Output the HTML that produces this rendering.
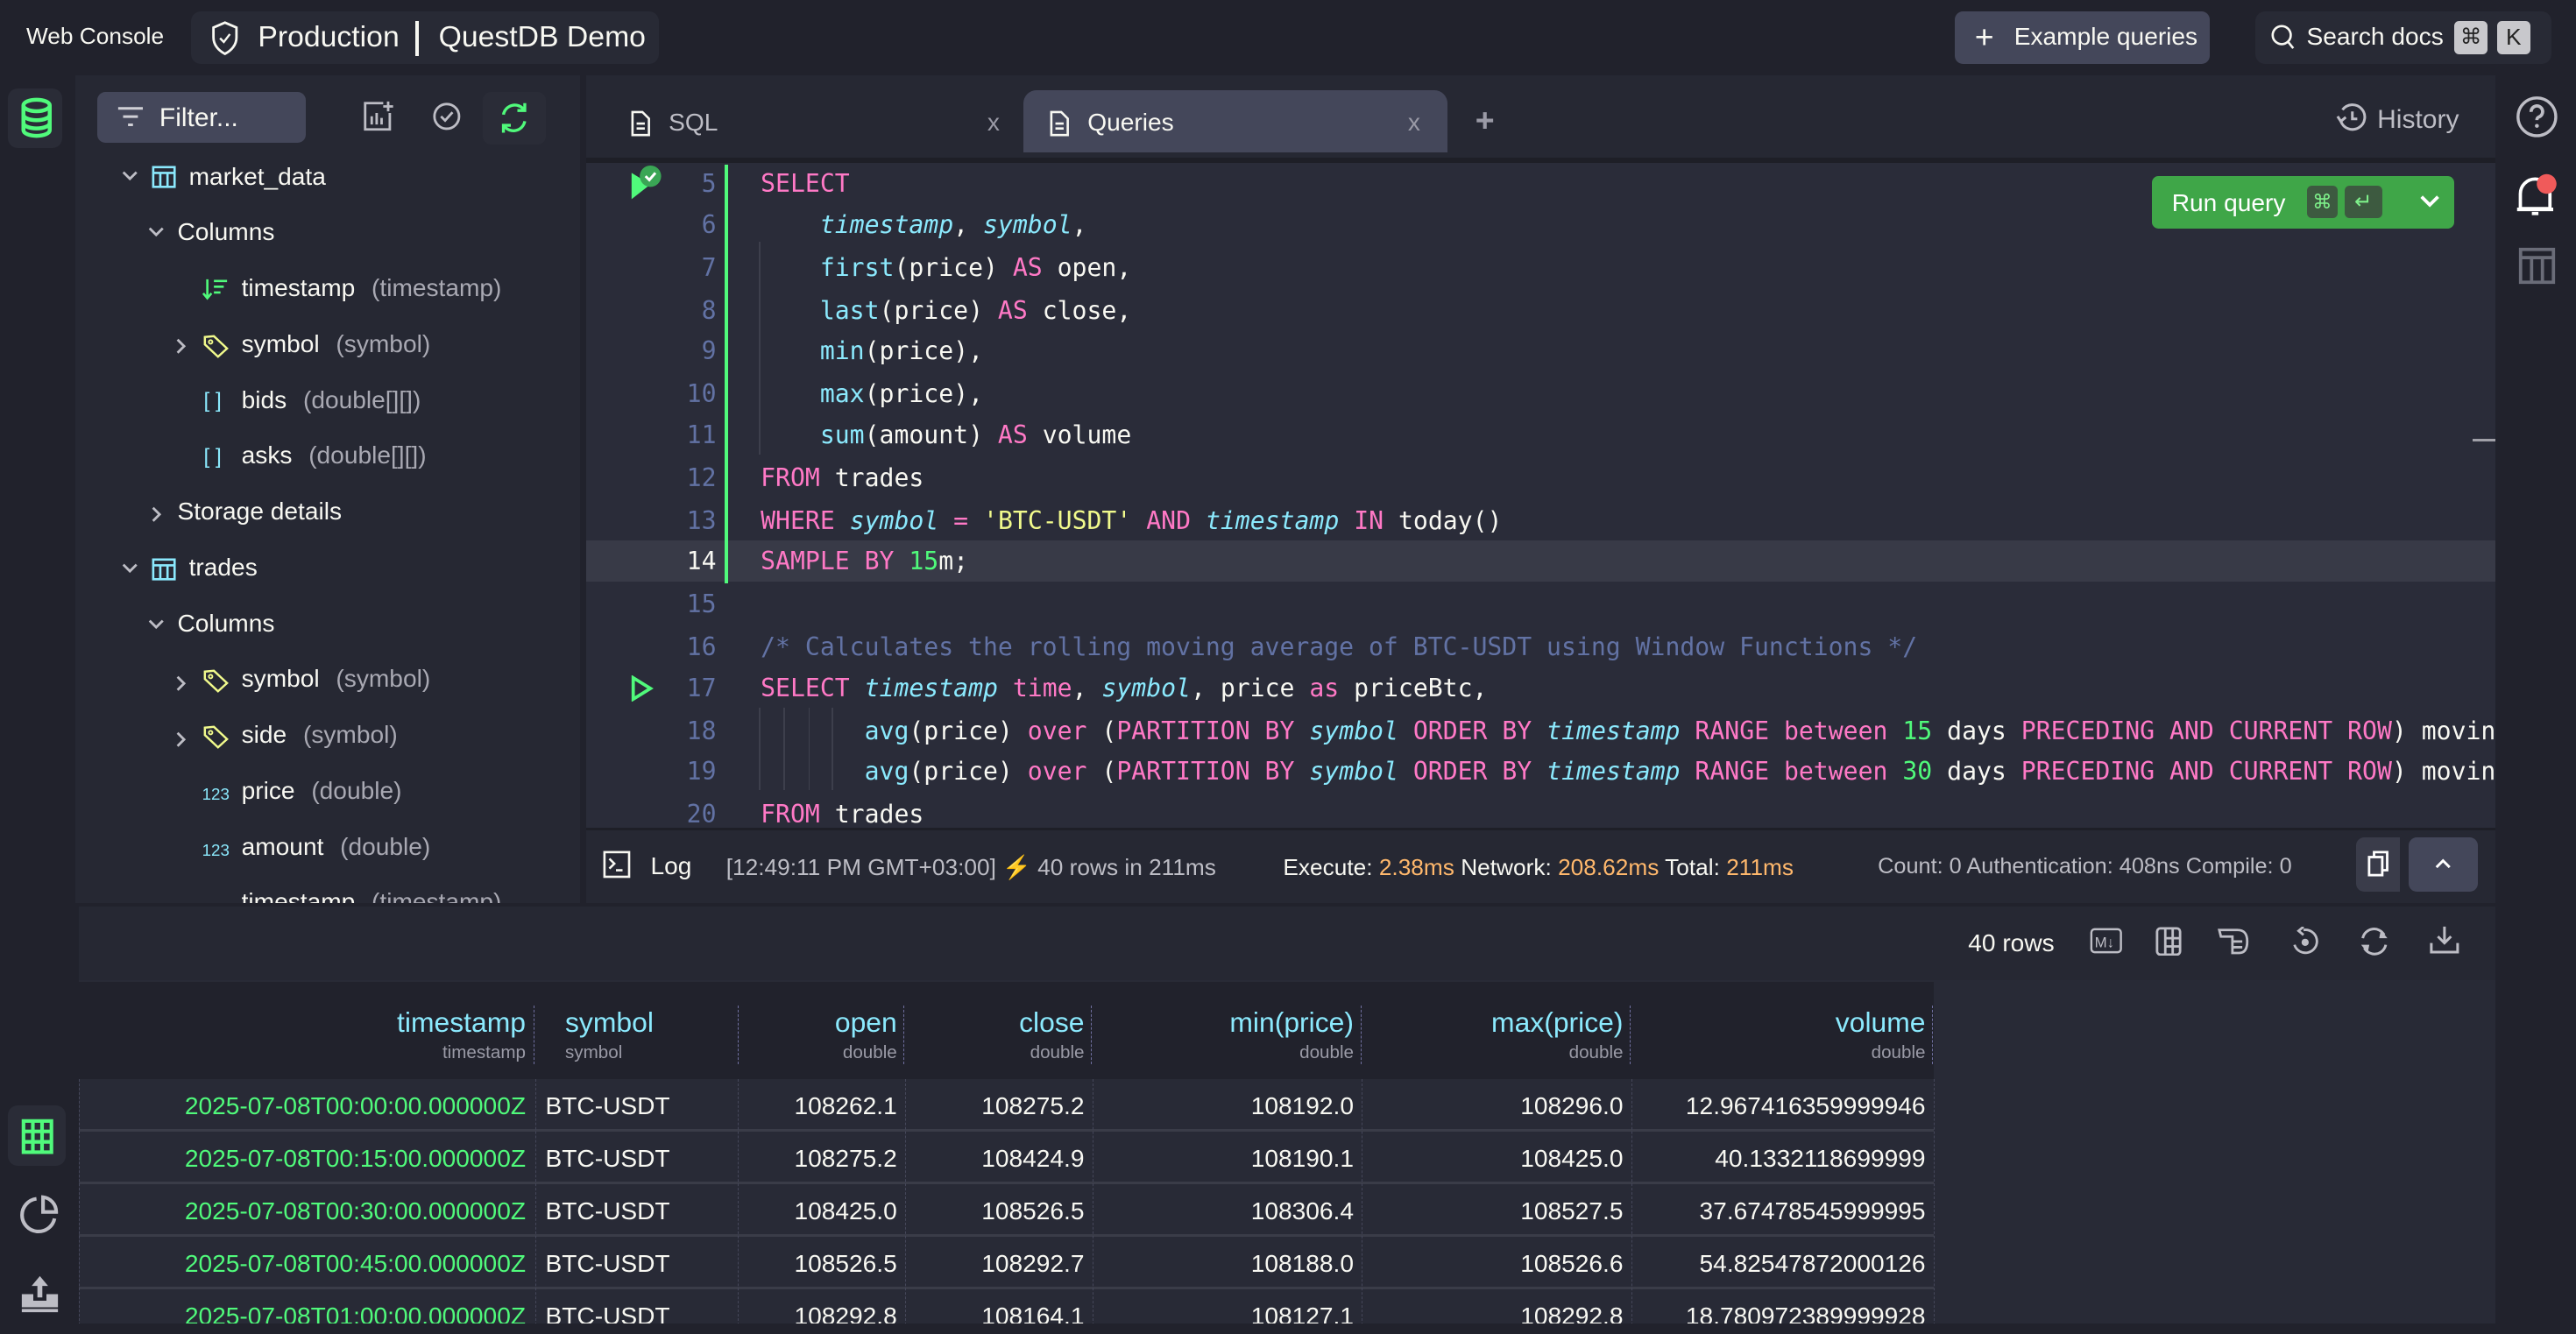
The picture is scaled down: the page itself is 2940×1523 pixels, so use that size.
<!DOCTYPE html>
<html><head><meta charset="utf-8">
<style>
*{box-sizing:border-box;margin:0;padding:0}
html,body{width:2940px;height:1522px;overflow:hidden;background:#21222c}
#app{position:absolute;left:0;top:0;width:1568px;height:812px;zoom:1.875;background:#21222c;font-family:"Liberation Sans",sans-serif;color:#f8f8f2;overflow:hidden}
.a{position:absolute}
.t{position:absolute;white-space:nowrap;margin-top:1px}
.mono{font-family:"DejaVu Sans Mono","Liberation Mono",monospace}
.ln{position:absolute;left:380px;width:56px;text-align:right;color:#6272a4;font-size:15px;margin-top:1px}
.code{position:absolute;left:463px;font-size:15px;white-space:pre;color:#f8f8f2;margin-top:1px}
.k{color:#ff79c6}.f{color:#8be9fd}.i{color:#8be9fd;font-style:italic}.s{color:#f1fa8c}.n{color:#50fa7b}.c{color:#6272a4}
.tree{position:absolute;font-size:15px;color:#f8f8f2;white-space:nowrap;margin-top:1px}
.tree .ty{color:#a9a9b3;margin-left:10px}
.hd{position:absolute;top:613px;text-align:right;color:#8be9fd;font-size:17px}
.hd small{display:block;color:#9a9aa6;font-size:11px;margin-top:2px}
.row{position:absolute;left:48px;width:1129px;height:32px;border-bottom:2px solid #3a3c48}
.vd{position:absolute;top:657px;height:150px;border-left:1px dashed #45475a}
</style></head><body><div id="app">

<!-- top bar -->
<div class="t" style="left:16px;top:13px;font-size:14px">Web Console</div>
<div class="a" style="left:116px;top:7px;width:285px;height:32px;background:#282a35;border-radius:6px"></div>
<svg class="a" style="left:127px;top:12px" width="20" height="22" viewBox="0 0 20 22"><path d="M10 1.5 L17 4.5 V10.5 C17 15 14 18.5 10 20.5 C6 18.5 3 15 3 10.5 V4.5 Z" fill="none" stroke="#f8f8f2" stroke-width="1.5"/><path d="M7 11 L9.3 13.3 L13 8.5" fill="none" stroke="#f8f8f2" stroke-width="1.3"/></svg>
<div class="t" style="left:157px;top:11px;font-size:18px">Production</div>
<div class="a" style="left:253px;top:13px;width:2px;height:21px;background:#f8f8f2"></div>
<div class="t" style="left:267px;top:11px;font-size:18px">QuestDB Demo</div>

<div class="a" style="left:1190px;top:7px;width:155px;height:32px;background:#44475a;border-radius:5px"></div>
<div class="t" style="left:1202px;top:10px;font-size:20px;color:#f8f8f2">+</div>
<div class="t" style="left:1226px;top:13px;font-size:15px">Example queries</div>
<div class="a" style="left:1373px;top:7px;width:180px;height:32px;background:#282a35;border-radius:6px"></div>
<svg class="a" style="left:1382px;top:14px" width="16" height="18" viewBox="0 0 16 18"><circle cx="7" cy="7.5" r="5.5" fill="none" stroke="#f8f8f2" stroke-width="1.4"/><path d="M10.8 11.5 L14 15.5" stroke="#f8f8f2" stroke-width="1.4"/></svg>
<div class="t" style="left:1404px;top:13px;font-size:15px">Search docs</div>
<div class="a" style="left:1494px;top:13px;width:20px;height:20px;background:#c8c8cc;border-radius:3px;color:#222;font-size:13px;text-align:center;line-height:20px">⌘</div>
<div class="a" style="left:1520px;top:13px;width:20px;height:20px;background:#c8c8cc;border-radius:3px;color:#222;font-size:14px;text-align:center;line-height:20px">K</div>

<!-- left icon column -->
<div class="a" style="left:5px;top:54px;width:33px;height:36px;background:#2a2c37;border-radius:6px"></div>
<svg class="a" style="left:12px;top:59px" width="20" height="26" viewBox="0 0 20 26"><g fill="none" stroke="#50fa7b" stroke-width="2.4"><ellipse cx="10" cy="5" rx="8" ry="3.5"/><path d="M2 5 V20 C2 22 5.5 23.5 10 23.5 C14.5 23.5 18 22 18 20 V5"/><path d="M2 10.5 C2 12.5 5.5 14 10 14 C14.5 14 18 12.5 18 10.5"/><path d="M2 15.5 C2 17.5 5.5 19 10 19 C14.5 19 18 17.5 18 15.5"/></g></svg>

<!-- schema panel -->
<div class="a" style="left:46px;top:46px;width:311px;height:504px;background:#262833"></div>
<div class="a" style="left:59px;top:56px;width:127px;height:31px;background:#44475a;border-radius:5px"></div>
<svg class="a" style="left:71px;top:64px" width="18" height="16" viewBox="0 0 18 16"><g stroke="#d0d0d6" stroke-width="1.6"><path d="M1 2 H16"/><path d="M4 7 H13"/><path d="M7 12 H10"/></g></svg>
<div class="t" style="left:97px;top:62px;font-size:16px">Filter...</div>
<svg class="a" style="left:220px;top:61px" width="20" height="20" viewBox="0 0 20 20"><g fill="none" stroke="#bdbdc5" stroke-width="1.5"><path d="M13 2 H2 V18 H17 V8"/><path d="M6 15 V10 M9 15 V8 M12 15 V11"/><path d="M16 1 V7 M13 4 H19"/></g></svg>
<svg class="a" style="left:263px;top:62px" width="18" height="18" viewBox="0 0 18 18"><circle cx="9" cy="9" r="7.5" fill="none" stroke="#bdbdc5" stroke-width="1.5"/><path d="M5.5 9 L8 11.5 L12.5 6.5" fill="none" stroke="#bdbdc5" stroke-width="1.5"/></svg>
<div class="a" style="left:294px;top:56px;width:38px;height:32px;background:#2a2c37;border-radius:5px"></div>
<svg class="a" style="left:303px;top:61px" width="20" height="22" viewBox="0 0 20 22"><g fill="none" stroke="#50fa7b" stroke-width="1.8"><path d="M3.5 9 A7 7 0 0 1 16 6"/><path d="M16.5 13 A7 7 0 0 1 4 16"/><path d="M16.5 2 V6.5 H12"/><path d="M3.5 20 V15.5 H8"/></g></svg>

<!-- tree -->
<svg class="a" style="left:73px;top:102px" width="12" height="10" viewBox="0 0 12 10"><path d="M2 3 L6 7 L10 3" fill="none" stroke="#bdbdc5" stroke-width="1.5"/></svg>
<svg class="a" style="left:92px;top:100px" width="15" height="15" viewBox="0 0 15 15"><g fill="none" stroke="#8be9fd" stroke-width="1.4"><rect x="1" y="1.5" width="13" height="12"/><path d="M1 5 H14 M5.3 5 V13.5 M9.7 5 V13.5"/></g></svg>
<div class="tree" style="left:115px;top:98px">market_data</div>
<svg class="a" style="left:89px;top:136px" width="12" height="10" viewBox="0 0 12 10"><path d="M2 3 L6 7 L10 3" fill="none" stroke="#bdbdc5" stroke-width="1.5"/></svg>
<div class="tree" style="left:108px;top:132px">Columns</div>

<svg class="a" style="left:123px;top:169px" width="16" height="14" viewBox="0 0 16 14"><g stroke="#50fa7b" stroke-width="1.4" fill="none"><path d="M3 1 V12 M0.5 9.5 L3 12.5 L5.5 9.5"/><path d="M7 2 H15 M7 5.5 H13 M7 9 H11"/></g></svg>
<div class="tree" style="left:147px;top:166px">timestamp<span class="ty">(timestamp)</span></div>
<svg class="a" style="left:105px;top:205px" width="10" height="12" viewBox="0 0 10 12"><path d="M3 2 L7 6 L3 10" fill="none" stroke="#bdbdc5" stroke-width="1.5"/></svg>
<svg class="a" style="left:123px;top:203px" width="17" height="15" viewBox="0 0 17 15"><path d="M1.5 2 L7 1.5 L15 9 L9.5 14 L1.5 6.5 Z" fill="none" stroke="#f1fa8c" stroke-width="1.3"/><circle cx="5" cy="5" r="1.1" fill="none" stroke="#f1fa8c" stroke-width="1"/></svg>
<div class="tree" style="left:147px;top:200px">symbol<span class="ty">(symbol)</span></div>
<div class="tree" style="left:124px;top:236px;color:#8be9fd;font-size:13px">[ ]</div>
<div class="tree" style="left:147px;top:234px">bids<span class="ty">(double[][])</span></div>
<div class="tree" style="left:124px;top:270px;color:#8be9fd;font-size:13px">[ ]</div>
<div class="tree" style="left:147px;top:268px">asks<span class="ty">(double[][])</span></div>
<svg class="a" style="left:90px;top:307px" width="10" height="12" viewBox="0 0 10 12"><path d="M3 2 L7 6 L3 10" fill="none" stroke="#bdbdc5" stroke-width="1.5"/></svg>
<div class="tree" style="left:108px;top:302px">Storage details</div>
<svg class="a" style="left:73px;top:341px" width="12" height="10" viewBox="0 0 12 10"><path d="M2 3 L6 7 L10 3" fill="none" stroke="#bdbdc5" stroke-width="1.5"/></svg>
<svg class="a" style="left:92px;top:339px" width="15" height="15" viewBox="0 0 15 15"><g fill="none" stroke="#8be9fd" stroke-width="1.4"><rect x="1" y="1.5" width="13" height="12"/><path d="M1 5 H14 M5.3 5 V13.5 M9.7 5 V13.5"/></g></svg>
<div class="tree" style="left:115px;top:336px">trades</div>
<svg class="a" style="left:89px;top:375px" width="12" height="10" viewBox="0 0 12 10"><path d="M2 3 L6 7 L10 3" fill="none" stroke="#bdbdc5" stroke-width="1.5"/></svg>
<div class="tree" style="left:108px;top:370px">Columns</div>
<svg class="a" style="left:105px;top:410px" width="10" height="12" viewBox="0 0 10 12"><path d="M3 2 L7 6 L3 10" fill="none" stroke="#bdbdc5" stroke-width="1.5"/></svg>
<svg class="a" style="left:123px;top:407px" width="17" height="15" viewBox="0 0 17 15"><path d="M1.5 2 L7 1.5 L15 9 L9.5 14 L1.5 6.5 Z" fill="none" stroke="#f1fa8c" stroke-width="1.3"/><circle cx="5" cy="5" r="1.1" fill="none" stroke="#f1fa8c" stroke-width="1"/></svg>
<div class="tree" style="left:147px;top:404px">symbol<span class="ty">(symbol)</span></div>
<svg class="a" style="left:105px;top:444px" width="10" height="12" viewBox="0 0 10 12"><path d="M3 2 L7 6 L3 10" fill="none" stroke="#bdbdc5" stroke-width="1.5"/></svg>
<svg class="a" style="left:123px;top:441px" width="17" height="15" viewBox="0 0 17 15"><path d="M1.5 2 L7 1.5 L15 9 L9.5 14 L1.5 6.5 Z" fill="none" stroke="#f1fa8c" stroke-width="1.3"/><circle cx="5" cy="5" r="1.1" fill="none" stroke="#f1fa8c" stroke-width="1"/></svg>
<div class="tree" style="left:147px;top:438px">side<span class="ty">(symbol)</span></div>
<div class="tree" style="left:123px;top:477px;color:#8be9fd;font-size:10px">123</div>
<div class="tree" style="left:147px;top:472px">price<span class="ty">(double)</span></div>
<div class="tree" style="left:123px;top:511px;color:#8be9fd;font-size:10px">123</div>
<div class="tree" style="left:147px;top:506px">amount<span class="ty">(double)</span></div>
<div class="a" style="left:46px;top:542px;width:311px;height:8px;overflow:hidden">
<div class="tree" style="left:101px;top:-2px">timestamp<span class="ty">(timestamp)</span></div></div>
<div class="a" style="left:353px;top:46px;width:4px;height:504px;background:#21222c"></div>

<!-- editor tabs -->
<div class="a" style="left:357px;top:46px;width:1162px;height:50px;background:#262833"></div>
<svg class="a" style="left:384px;top:67px" width="12" height="16" viewBox="0 0 12 16"><g fill="none" stroke="#f8f8f2" stroke-width="1.4"><path d="M1 1 H7 L11 5 V15 H1 Z"/><path d="M3.5 8 H8.5 M3.5 11 H8.5"/></g></svg>
<div class="t" style="left:407px;top:65px;font-size:15px;color:#bdbdc5">SQL</div>
<div class="t" style="left:601px;top:65px;font-size:15px;color:#9a9aa6">x</div>
<div class="a" style="left:623px;top:55px;width:258px;height:38px;background:#44475a;border-radius:8px 8px 0 0"></div>
<svg class="a" style="left:639px;top:67px" width="12" height="16" viewBox="0 0 12 16"><g fill="none" stroke="#f8f8f2" stroke-width="1.4"><path d="M1 1 H7 L11 5 V15 H1 Z"/><path d="M3.5 8 H8.5 M3.5 11 H8.5"/></g></svg>
<div class="t" style="left:662px;top:65px;font-size:15px">Queries</div>
<div class="t" style="left:857px;top:65px;font-size:15px;color:#9a9aa6">x</div>
<div class="t" style="left:898px;top:61px;font-size:20px;color:#9a9aa6;font-weight:bold">+</div>
<svg class="a" style="left:1422px;top:62px" width="20" height="20" viewBox="0 0 20 20"><g fill="none" stroke="#bdbdc5" stroke-width="1.6"><path d="M4 5 A7.5 7.5 0 1 1 3 12"/><path d="M1 9 L3 12 L6 9.5"/><path d="M10 6 V10.5 H13"/></g></svg>
<div class="t" style="left:1447px;top:63px;font-size:16px;color:#bdbdc5">History</div>

<!-- code area -->
<div class="a" style="left:357px;top:96px;width:1162px;height:408px;background:#2a2c39"></div>
<div class="a" style="left:357px;top:96px;width:1162px;height:3px;background:#1e1f27"></div>
<div class="a" style="left:357px;top:329px;width:1162px;height:25px;background:#383a47"></div>
<div class="a" style="left:441px;top:100px;width:2px;height:255px;background:#50fa7b"></div>
<div class="a" style="left:462px;top:147px;width:1px;height:130px;background:#3d3f4c"></div>
<div class="a" style="left:462px;top:431px;width:1px;height:50px;background:#3d3f4c"></div>
<div class="a" style="left:477px;top:431px;width:1px;height:50px;background:#3d3f4c"></div>
<div class="a" style="left:492px;top:431px;width:1px;height:50px;background:#3d3f4c"></div>
<div class="a" style="left:506px;top:431px;width:1px;height:50px;background:#3d3f4c"></div>
<div class="a" style="left:1505px;top:267px;width:14px;height:2px;background:#a0a0a8"></div>
<svg class="a" style="left:383px;top:100px" width="21" height="22" viewBox="0 0 21 22"><path d="M1.5 5 L13 12 L1.5 21 Z" fill="#50fa7b"/><circle cx="13" cy="7" r="6.5" fill="#3aa655"/><path d="M10 7 L12.3 9.3 L16 5" fill="none" stroke="#fff" stroke-width="1.6"/></svg>
<svg class="a" style="left:383px;top:411px" width="16" height="16" viewBox="0 0 16 16"><path d="M2.5 1.5 L13 8 L2.5 14.5 Z" fill="none" stroke="#50fa7b" stroke-width="2"/></svg>

<div class="a mono" style="left:0;top:0;width:1519px;height:504px;overflow:hidden">
<div class="ln" style="top:102px">5</div><div class="code" style="top:102px"><span class="k">SELECT</span></div>
<div class="ln" style="top:127px">6</div><div class="code" style="top:127px">    <span class="i">timestamp</span>, <span class="i">symbol</span>,</div>
<div class="ln" style="top:153px">7</div><div class="code" style="top:153px">    <span class="f">first</span>(price) <span class="k">AS</span> open,</div>
<div class="ln" style="top:179px">8</div><div class="code" style="top:179px">    <span class="f">last</span>(price) <span class="k">AS</span> close,</div>
<div class="ln" style="top:204px">9</div><div class="code" style="top:204px">    <span class="f">min</span>(price),</div>
<div class="ln" style="top:230px">10</div><div class="code" style="top:230px">    <span class="f">max</span>(price),</div>
<div class="ln" style="top:255px">11</div><div class="code" style="top:255px">    <span class="f">sum</span>(amount) <span class="k">AS</span> volume</div>
<div class="ln" style="top:281px">12</div><div class="code" style="top:281px"><span class="k">FROM</span> trades</div>
<div class="ln" style="top:307px">13</div><div class="code" style="top:307px"><span class="k">WHERE</span> <span class="i">symbol</span> <span class="k">=</span> <span class="s">'BTC-USDT'</span> <span class="k">AND</span> <span class="i">timestamp</span> <span class="k">IN</span> today()</div>
<div class="ln" style="top:332px;color:#f8f8f2">14</div><div class="code" style="top:332px"><span class="k">SAMPLE BY</span> <span class="n">15</span>m;</div>
<div class="ln" style="top:358px">15</div>
<div class="ln" style="top:384px">16</div><div class="code" style="top:384px"><span class="c">/* Calculates the rolling moving average of BTC-USDT using Window Functions */</span></div>
<div class="ln" style="top:409px">17</div><div class="code" style="top:409px"><span class="k">SELECT</span> <span class="i">timestamp</span> <span class="k">time</span>, <span class="i">symbol</span>, price <span class="k">as</span> priceBtc,</div>
<div class="ln" style="top:435px">18</div><div class="code" style="top:435px">       <span class="f">avg</span>(price) <span class="k">over</span> (<span class="k">PARTITION BY</span> <span class="i">symbol</span> <span class="k">ORDER BY</span> <span class="i">timestamp</span> <span class="k">RANGE between</span> <span class="n">15</span> days <span class="k">PRECEDING AND CURRENT ROW</span>) moving</div>
<div class="ln" style="top:460px">19</div><div class="code" style="top:460px">       <span class="f">avg</span>(price) <span class="k">over</span> (<span class="k">PARTITION BY</span> <span class="i">symbol</span> <span class="k">ORDER BY</span> <span class="i">timestamp</span> <span class="k">RANGE between</span> <span class="n">30</span> days <span class="k">PRECEDING AND CURRENT ROW</span>) moving</div>
<div class="ln" style="top:486px">20</div><div class="code" style="top:486px"><span class="k">FROM</span> trades</div>
</div>

<!-- run query -->
<div class="a" style="left:1310px;top:107px;width:184px;height:32px;background:#3fa648;border-radius:4px"></div>
<div class="t" style="left:1322px;top:114px;font-size:15px;color:#fff">Run query</div>
<div class="a" style="left:1404px;top:113px;width:19px;height:20px;background:#3d5a40;border-radius:3px;color:#7ef08a;font-size:12px;text-align:center;line-height:20px">⌘</div>
<div class="a" style="left:1427px;top:113px;width:23px;height:20px;background:#3d5a40;border-radius:3px;color:#7ef08a;font-size:13px;text-align:center;line-height:20px">↵</div>
<svg class="a" style="left:1472px;top:117px" width="14" height="12" viewBox="0 0 14 12"><path d="M2 3 L7 8 L12 3" fill="none" stroke="#fff" stroke-width="2"/></svg>

<!-- right column -->
<div class="a" style="left:1519px;top:46px;width:49px;height:766px;background:#21222c"></div>
<svg class="a" style="left:1531px;top:58px" width="26" height="26" viewBox="0 0 26 26"><circle cx="13" cy="13" r="11.5" fill="none" stroke="#bdbdc5" stroke-width="1.8"/><path d="M9.5 10 A3.5 3.5 0 1 1 14 13.2 C13.2 13.6 13 14 13 15" fill="none" stroke="#bdbdc5" stroke-width="2"/><circle cx="13" cy="18.5" r="1.2" fill="#bdbdc5"/></svg>
<svg class="a" style="left:1530px;top:104px" width="30" height="30" viewBox="0 0 30 30"><path d="M4 23 V14 A9 9 0 0 1 22 14 V23 Z" fill="none" stroke="#fff" stroke-width="2"/><path d="M2 23.5 H24" stroke="#fff" stroke-width="2.2"/><path d="M11 26 H15" stroke="#fff" stroke-width="2"/><circle cx="20" cy="8" r="6" fill="#f05a5a"/></svg>
<svg class="a" style="left:1532px;top:150px" width="24" height="24" viewBox="0 0 24 24"><g fill="none" stroke="#6a6c78" stroke-width="2"><rect x="2" y="2" width="20" height="20"/><path d="M2 7 H22 M8.7 7 V22 M15.3 7 V22"/></g></svg>

<!-- log bar -->
<div class="a" style="left:357px;top:504px;width:1162px;height:46px;background:#262833;border-top:2px solid #1e1f27"></div>
<svg class="a" style="left:367px;top:518px" width="17" height="17" viewBox="0 0 17 17"><g fill="none" stroke="#f8f8f2" stroke-width="1.4"><rect x="1" y="1" width="15" height="15"/><path d="M4 5 L7 8 L4 11 M8 12 H12"/></g></svg>
<div class="t" style="left:396px;top:518px;font-size:15px">Log</div>
<div class="t" style="left:442px;top:519px;font-size:14px;color:#bdbdc5">[12:49:11 PM GMT+03:00] <span style="color:#f1fa8c">⚡</span> 40 rows in 211ms</div>
<div class="t" style="left:781px;top:519px;font-size:14px">Execute: <span style="color:#ffb86c">2.38ms</span> Network: <span style="color:#ffb86c">208.62ms</span> Total: <span style="color:#ffb86c">211ms</span></div>
<div class="t" style="left:1143px;top:519px;font-size:13.5px;color:#bdbdc5">Count: 0 Authentication: 408ns Compile: 0</div>
<div class="a" style="left:1434px;top:510px;width:27px;height:33px;background:#3a3c4a;border-radius:5px 0 0 5px"></div>
<svg class="a" style="left:1441px;top:518px" width="14" height="17" viewBox="0 0 14 17"><g fill="none" stroke="#fff" stroke-width="1.5"><rect x="1" y="4" width="8" height="11"/><path d="M4 4 V1 H12 V12 H9"/></g></svg>
<div class="a" style="left:1466px;top:510px;width:42px;height:33px;background:#44475a;border-radius:5px"></div>
<svg class="a" style="left:1481px;top:521px" width="12" height="10" viewBox="0 0 12 10"><path d="M2 7 L6 3 L10 7" fill="none" stroke="#fff" stroke-width="1.6"/></svg>

<!-- results -->
<div class="a" style="left:48px;top:552px;width:1471px;height:260px;background:#282a36"></div>
<div class="a" style="left:48px;top:552px;width:1471px;height:45px;background:#262833"></div>
<div class="t" style="left:1198px;top:565px;font-size:15px">40 rows</div>
<svg class="a" style="left:1272px;top:565px" width="20" height="16" viewBox="0 0 20 16"><rect x="1" y="1" width="18" height="14" rx="2" fill="none" stroke="#bdbdc5" stroke-width="1.3"/><text x="3" y="12" font-size="9" fill="#bdbdc5" font-family="Liberation Sans">M↓</text></svg>
<svg class="a" style="left:1312px;top:564px" width="16" height="18" viewBox="0 0 16 18"><g fill="none" stroke="#bdbdc5" stroke-width="1.5"><rect x="1" y="1" width="14" height="16" rx="2"/><path d="M6 1 V17 M6 7 H15 M6 12 H15 M10.5 1 V17"/></g></svg>
<svg class="a" style="left:1350px;top:564px" width="20" height="18" viewBox="0 0 20 18"><g fill="none" stroke="#bdbdc5" stroke-width="1.5"><path d="M1 2 H12 C16 2 18 4 18 9 C18 14 16 16 13 16 H9 V6 H2 Z"/><path d="M9 9 H15 M9 12.5 H15"/></g></svg>
<svg class="a" style="left:1394px;top:564px" width="18" height="18" viewBox="0 0 18 18"><g fill="none" stroke="#bdbdc5" stroke-width="1.5"><path d="M8 2 A7 7 0 1 1 2.5 11"/><path d="M8 0 L5 2.5 L8 5"/></g><circle cx="9" cy="9.5" r="2.2" fill="#bdbdc5"/></svg>
<svg class="a" style="left:1435px;top:564px" width="20" height="18" viewBox="0 0 20 18"><g fill="none" stroke="#bdbdc5" stroke-width="1.6"><path d="M3 7 A7 7 0 0 1 16 5"/><path d="M17 11 A7 7 0 0 1 4 13"/></g><path d="M14 2 L18 7 L13 7Z M6 16 L2 11 L7 11Z" fill="#bdbdc5"/></svg>
<svg class="a" style="left:1479px;top:563px" width="18" height="18" viewBox="0 0 18 18"><g fill="none" stroke="#bdbdc5" stroke-width="1.6"><path d="M9 1 V11 M5 7 L9 11 L13 7"/><path d="M1 11 V16.5 H17 V11"/></g></svg>

<!-- grid header -->
<div class="a" style="left:48px;top:598px;width:1129px;height:59px;background:#21222c"></div>
<div class="hd" style="left:200px;width:120px">timestamp<small>timestamp</small></div>
<div class="hd" style="left:344px;text-align:left">symbol<small>symbol</small></div>
<div class="hd" style="left:460px;width:86px">open<small>double</small></div>
<div class="hd" style="left:560px;width:100px">close<small>double</small></div>
<div class="hd" style="left:680px;width:144px">min(price)<small>double</small></div>
<div class="hd" style="left:840px;width:148px">max(price)<small>double</small></div>
<div class="hd" style="left:1000px;width:172px">volume<small>double</small></div>
<div class="a" style="left:325px;top:612px;height:36px;border-left:1px dashed #7070a0"></div>
<div class="a" style="left:449px;top:612px;height:36px;border-left:1px dashed #7070a0"></div>
<div class="a" style="left:550px;top:612px;height:36px;border-left:1px dashed #7070a0"></div>
<div class="a" style="left:664px;top:612px;height:36px;border-left:1px dashed #7070a0"></div>
<div class="a" style="left:828px;top:612px;height:36px;border-left:1px dashed #7070a0"></div>
<div class="a" style="left:992px;top:612px;height:36px;border-left:1px dashed #7070a0"></div>
<div class="a" style="left:1176px;top:612px;height:36px;border-left:1px dashed #7070a0"></div>

<!-- rows -->
<div class="row" style="top:657px"></div><div class="row" style="top:689px"></div><div class="row" style="top:721px"></div><div class="row" style="top:753px"></div><div class="row" style="top:785px;border:none"></div>
<div class="vd" style="left:48px"></div><div class="vd" style="left:326px"></div><div class="vd" style="left:449px"></div><div class="vd" style="left:551px"></div><div class="vd" style="left:665px"></div><div class="vd" style="left:829px"></div><div class="vd" style="left:993px"></div><div class="vd" style="left:1177px"></div>

<div class="a" style="left:0;top:658px;width:1177px;height:148px;overflow:hidden;font-size:15px">
<div class="t" style="left:100px;top:6px;width:220px;text-align:right;color:#50fa7b">2025-07-08T00:00:00.000000Z</div>
<div class="t" style="left:100px;top:38px;width:220px;text-align:right;color:#50fa7b">2025-07-08T00:15:00.000000Z</div>
<div class="t" style="left:100px;top:70px;width:220px;text-align:right;color:#50fa7b">2025-07-08T00:30:00.000000Z</div>
<div class="t" style="left:100px;top:102px;width:220px;text-align:right;color:#50fa7b">2025-07-08T00:45:00.000000Z</div>
<div class="t" style="left:100px;top:134px;width:220px;text-align:right;color:#50fa7b">2025-07-08T01:00:00.000000Z</div>
<div class="t" style="left:332px;top:6px">BTC-USDT</div><div class="t" style="left:332px;top:38px">BTC-USDT</div><div class="t" style="left:332px;top:70px">BTC-USDT</div><div class="t" style="left:332px;top:102px">BTC-USDT</div><div class="t" style="left:332px;top:134px">BTC-USDT</div>
<div class="t" style="left:450px;width:96px;text-align:right;top:6px">108262.1</div><div class="t" style="left:450px;width:96px;text-align:right;top:38px">108275.2</div><div class="t" style="left:450px;width:96px;text-align:right;top:70px">108425.0</div><div class="t" style="left:450px;width:96px;text-align:right;top:102px">108526.5</div><div class="t" style="left:450px;width:96px;text-align:right;top:134px">108292.8</div>
<div class="t" style="left:560px;width:100px;text-align:right;top:6px">108275.2</div><div class="t" style="left:560px;width:100px;text-align:right;top:38px">108424.9</div><div class="t" style="left:560px;width:100px;text-align:right;top:70px">108526.5</div><div class="t" style="left:560px;width:100px;text-align:right;top:102px">108292.7</div><div class="t" style="left:560px;width:100px;text-align:right;top:134px">108164.1</div>
<div class="t" style="left:680px;width:144px;text-align:right;top:6px">108192.0</div><div class="t" style="left:680px;width:144px;text-align:right;top:38px">108190.1</div><div class="t" style="left:680px;width:144px;text-align:right;top:70px">108306.4</div><div class="t" style="left:680px;width:144px;text-align:right;top:102px">108188.0</div><div class="t" style="left:680px;width:144px;text-align:right;top:134px">108127.1</div>
<div class="t" style="left:840px;width:148px;text-align:right;top:6px">108296.0</div><div class="t" style="left:840px;width:148px;text-align:right;top:38px">108425.0</div><div class="t" style="left:840px;width:148px;text-align:right;top:70px">108527.5</div><div class="t" style="left:840px;width:148px;text-align:right;top:102px">108526.6</div><div class="t" style="left:840px;width:148px;text-align:right;top:134px">108292.8</div>
<div class="t" style="left:1000px;width:172px;text-align:right;top:6px">12.967416359999946</div><div class="t" style="left:1000px;width:172px;text-align:right;top:38px">40.1332118699999</div><div class="t" style="left:1000px;width:172px;text-align:right;top:70px">37.67478545999995</div><div class="t" style="left:1000px;width:172px;text-align:right;top:102px">54.82547872000126</div><div class="t" style="left:1000px;width:172px;text-align:right;top:134px">18.780972389999928</div>
</div>
<div class="a" style="left:0;top:806px;width:1568px;height:6px;background:#21222c"></div>

<!-- bottom-left icons -->
<div class="a" style="left:0;top:552px;width:48px;height:260px;background:#21222c"></div>
<div class="a" style="left:5px;top:673px;width:35px;height:37px;background:#2a2c37;border-radius:6px"></div>
<svg class="a" style="left:13px;top:681px" width="20" height="22" viewBox="0 0 20 22"><g fill="none" stroke="#50fa7b" stroke-width="2.2"><rect x="1.5" y="1.5" width="17" height="19"/><path d="M7.2 1.5 V20.5 M12.8 1.5 V20.5 M1.5 7.8 H18.5 M1.5 14.2 H18.5"/></g></svg>
<svg class="a" style="left:11px;top:727px" width="26" height="26" viewBox="0 0 26 26"><g fill="none" stroke="#bdbdc5" stroke-width="2.2"><path d="M11 3 A10 10 0 1 0 22 15"/><path d="M15 2 V11 H23 A9 9 0 0 0 15 2 Z"/></g></svg>
<svg class="a" style="left:12px;top:776px" width="24" height="24" viewBox="0 0 24 24"><g fill="#bdbdc5"><path d="M12 1 L7 7 H10.5 V14 H13.5 V7 H17 Z"/><path d="M1 12 H8 V16 H16 V12 H23 V20 H1 Z"/><rect x="1" y="21" width="22" height="2"/></g></svg>

</div></body></html>
